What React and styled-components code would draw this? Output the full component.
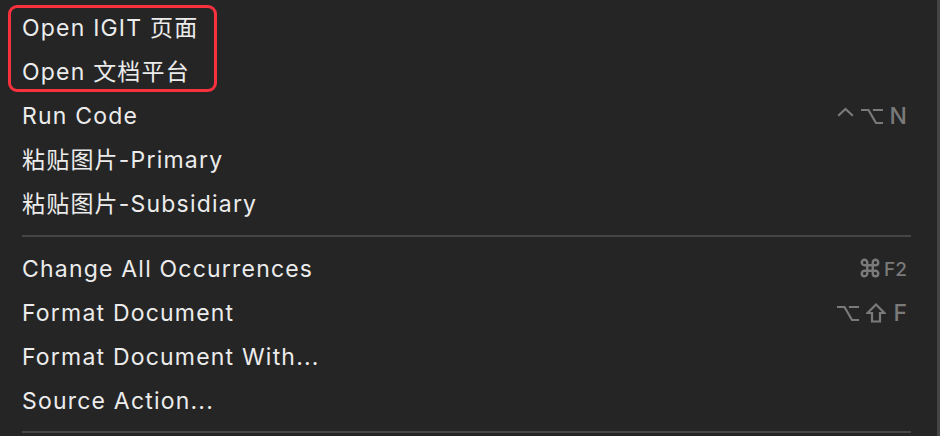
import React from "react";
import styled, { createGlobalStyle } from "styled-components";
import { Command } from "lucide-react";

const Global = createGlobalStyle`
  html, body {
    margin: 0;
    padding: 0;
    background: #252525;
  }
  body {
    font-family: Inter, "Noto Sans CJK SC", "DejaVu Sans", sans-serif;
  }
`;

const Menu = styled.div`
  position: relative;
  width: 940px;
  height: 436px;
  box-sizing: border-box;
  padding-top: 6px;
  background: #252525;
  border-right: 3px solid #454545;
  overflow: hidden;
`;

const Item = styled.div`
  display: flex;
  align-items: center;
  justify-content: space-between;
  height: 44px;
  padding: 0 30px 0 22px;
  color: #ececec;
  font-size: 23px;
  letter-spacing: 1.2px;
  line-height: 1;
`;

const Keys = styled.span`
  display: flex;
  align-items: center;
  gap: ${(p) => p.$gap ?? 7}px;
  color: #7a7a7a;
  font-family: Inter, sans-serif;
  font-size: ${(p) => p.$size || 23}px;
  font-weight: 500;
  letter-spacing: 0;
`;

const Glyph = styled.svg`
  display: block;
  fill: none;
  stroke: #7a7a7a;
  stroke-width: 2.2;
  stroke-linecap: square;
  stroke-linejoin: miter;
`;

const Separator = styled.hr`
  margin: ${(p) => p.$m || "9px 26px 10px 22px"};
  border: none;
  height: 2px;
  background: #464646;
`;

const Highlight = styled.div`
  position: absolute;
  left: 8px;
  top: 5px;
  width: 203px;
  height: 81px;
  border: 3.5px solid #f8313f;
  border-radius: 9px;
  pointer-events: none;
`;

const Ctrl = () => (
  <Glyph width="17" height="18" viewBox="0 0 17 18">
    <polyline points="2,8 8.5,2 15,8" />
  </Glyph>
);

const Opt = () => (
  <Glyph width="22" height="17" viewBox="0 0 22 17">
    <path d="M1 2H7.5L15 15H21M13 2H21" />
  </Glyph>
);

const Shift = () => (
  <Glyph width="20" height="20" viewBox="0 0 20 20">
    <polygon points="10,1.5 18.5,10 14,10 14,18.5 6,18.5 6,10 1.5,10" />
  </Glyph>
);

const Cmd = () => <Command size={22} color="#7a7a7a" strokeWidth={2.6} />;

const top = [
  { label: "Open IGIT 页面" },
  { label: "Open 文档平台" },
  { label: "Run Code", keys: [<Ctrl key="c" />, <Opt key="o" />, "N"] },
  { label: "粘贴图片-Primary" },
  { label: "粘贴图片-Subsidiary" },
];

const bottom = [
  { label: "Change All Occurrences", keys: [<Cmd key="m" />, "F2"], gap: 3, size: 19 },
  { label: "Format Document", keys: [<Opt key="o" />, <Shift key="s" />, "F"] },
  { label: "Format Document With..." },
  { label: "Source Action..." },
];

const Row = ({ label, keys, gap, size }) => (
  <Item>
    <span>{label}</span>
    {keys && (
      <Keys $gap={gap} $size={size}>
        {keys.map((k, i) => (
          <span key={i}>{k}</span>
        ))}
      </Keys>
    )}
  </Item>
);

const App = () => (
  <Menu>
    <Global />
    {top.map((r) => (
      <Row key={r.label} {...r} />
    ))}
    <Separator />
    {bottom.map((r) => (
      <Row key={r.label} {...r} />
    ))}
    <Separator $m="8px 26px 0 22px" />
    <Highlight />
  </Menu>
);

export default App;
